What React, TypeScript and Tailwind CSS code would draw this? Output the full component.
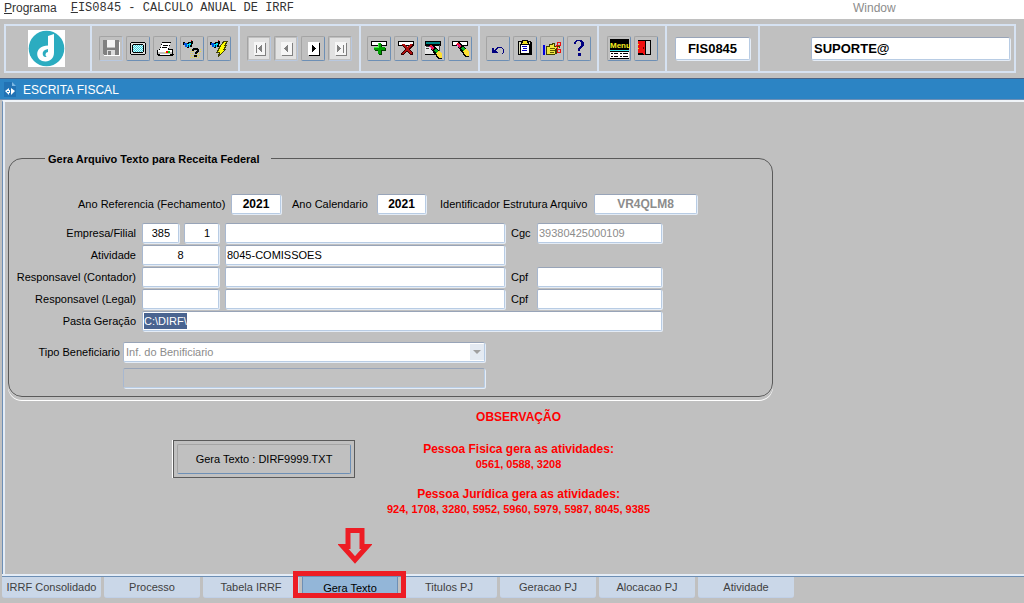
import React from 'react';

type IconProps = { children: React.ReactNode };

function Icon({ children }: IconProps) {
  return (
    <svg viewBox="0 0 24 25" width="24" height="25" shapeRendering="crispEdges" aria-hidden="true" className="block">
      {children}
    </svg>
  );
}

const SaveIcon = () => (
  <Icon>
    <path fill="#fff" d="M5 20h16V6h-1v13H5z" />
    <path fill="#808080" d="M4 4h4v8h8V4h4v15H5v-1H4z" />
    <path fill="#f4f4f4" d="M8 4h8v7H8z" />
    <path fill="#dcdcdc" d="M8 14h8v5H8z" />
    <path fill="#808080" d="M9 15h3v4H9z" />
  </Icon>
);

const ScreenIcon = () => (
  <Icon>
    <path fill="#000" d="M5 6h14v1h1v11h-1v1H5v-1H4V7h1z" />
    <path fill="#e0e0e0" d="M5 7h14v11H5z" />
    <path fill="#000" d="M7 8h10v1h1v7h-1v1H7v-1H6V9h1z" />
    <path fill="#d8ffff" d="M7 9h10v7H7z" />
    <path stroke="#40c8d8" strokeDasharray="1 1" d="M7 9.500h10M8 10.500h9M7 11.500h10M8 12.500h9M7 13.500h10M8 14.500h9M7 15.500h10" />
  </Icon>
);

const PrinterIcon = () => (
  <Icon>
    <path fill="#000" d="M9 6h9v1h-1v3h-1v3h3l1 1v4h1v1h-1v1H5v-1H4v-5h2l2-4z" />
    <path fill="#fff" d="M9 7h8l-2 7H7z" />
    <path fill="#000" d="M10 9h5v1h-5zM9 11h5v1H9z" />
    <path fill="#fff" d="M5 14h14v2H5z" />
    <path fill="#c0c0c0" d="M5 16h14v2H5z" />
    <path fill="#f00" d="M13 15h2v2h-2z" />
    <path fill="#0c0" d="M15 15h2v2h-2z" />
    <path fill="#ff0" d="M12 16h1v1h-1z" />
    <path fill="#fff" d="M7 18h10v1H7z" />
  </Icon>
);

const Torch = () => (
  <>
    <path fill="#000" d="M3 6h2v1h3V6h3V5h2v3h-1v3H9v1H7v-1H5V9H3z" />
    <path fill="#0050e0" d="M4 7h3v4H5V9H4z" />
    <path fill="#00e0f0" d="M7 8h2V7h2v2h-1v2H7z" />
    <path fill="#000080" d="M8 9h1v2H8z" />
    <path fill="#e01010" d="M11 4h1v1h-1z" />
  </>
);

const QueryHelpIcon = () => (
  <Icon>
    <path stroke="#e8d840" strokeDasharray="1 1" d="M10 13.500h3M18 13.500h3M11 15.500h4M18 15.500h3M10 17.500h4M17 17.500h4M11 19.500h3M17 19.500h3M10 21.500h10" />
    <Torch />
    <path fill="#000" d="M13 12h5v1h1v3h-1v1h-1v1h-2v-2h1v-1h1v-1h-3v1h-2v-2h1zM14 19h3v2h-3z" />
  </Icon>
);

const QueryRunIcon = () => (
  <Icon>
    <Torch />
    <path fill="#ffff00" stroke="#404000" strokeWidth="1" d="M17 5h4l-3 4h2l-3 4h2l-8 8 2-5h-3l3-4h-1z" />
  </Icon>
);

function NavIcon({ active, d }: { active?: boolean; d: string }) {
  return (
    <Icon>
      {!active && <path fill="#e2e2e2" d="M2 2h20v21H2z" />}
      <path fill={active ? '#000' : '#808080'} d="M8 7h11v13H8z" />
      <path fill={active ? '#fff' : '#f6f6f6'} d="M7 6h11v13H7z" />
      <path fill={active ? '#000' : '#808080'} d={d} />
    </Icon>
  );
}

const NEXT_D = 'M11 9h1v1h1v1h1v1h1v1h-1v1h-1v1h-1v1h-1z';
const PREV_D = 'M14 9h-1v1h-1v1h-1v1h-1v1h1v1h1v1h1v1h1z';
const LAST_D = 'M9 9h1v1h1v1h1v1h1v1h-1v1h-1v1h-1v1H9zM15 9h1v8h-1z';
const FIRST_D = 'M15 9h-1v1h-1v1h-1v1h-1v1h1v1h1v1h1v1h1zM9 9h1v8H9z';

const RecordBar = () => (
  <>
    <path fill="#000" d="M4 5h16v5H4z" />
    <path fill="#fff" d="M5 6h14v3H5z" />
  </>
);

const InsertIcon = () => (
  <Icon>
    <RecordBar />
    <path fill="#004000" d="M11 8h4v4h4v3h-4v4h-3v-4H8v-3h3z" />
    <path fill="#00a000" d="M11 7h3v4h4v3h-4v4h-3v-4H7v-3h4z" />
    <path fill="#40f040" d="M11 7h1v5H7v-1h4z" />
  </Icon>
);

const RemoveIcon = () => (
  <Icon>
    <RecordBar />
    <path fill="#300" d="M8 8h3l2 3 3-3h3v2l-3 3 3 4v2h-3l-3-4-3 4H7v-2l4-4-3-3z" />
    <path fill="#b01010" d="M8 8h2l3 3 3-3h2v1l-4 4 4 4v1h-2l-3-4-3 4H8v-1l4-4-4-4z" />
  </Icon>
);

const Crayon = () => (
  <>
    <path fill="#000" d="M8 8l3-2 10 10v5h-4z" />
    <path fill="#ffe030" d="M15 15l3-2 3 3v4h-3z" />
    <path fill="#00b020" d="M13 12l2-1 2 2-2 2z" />
    <path fill="#e8107c" d="M8 8l3-1 2 3-2 2z" />
    <path fill="#f02020" d="M9 7h2v2H9zM11 10h2v1h-2z" />
    <path fill="#ff60ff" d="M9 9h1v1H9z" />
  </>
);

const ClearFormIcon = () => (
  <Icon>
    <path fill="#000" d="M4 5h16v5H4zM4 10h14v9H4z" />
    <path fill="#008080" d="M5 6h14v2H5z" />
    <path fill="#e8e8e8" d="M4 10h15v8H4z" />
    <path fill="#404040" d="M5 12h3v1H5zM5 10h4v1H5zM18 9h1v6h-1z" />
    <g transform="translate(0 2)">
      <Crayon />
    </g>
  </Icon>
);

const ClearRecordIcon = () => (
  <Icon>
    <RecordBar />
    <Crayon />
  </Icon>
);

const UndoIcon = () => (
  <Icon>
    <path fill="#000080" d="M6 12h2v2h1v-1h1v-1h1v-1h5v1h1v1h1v4h-1v1h-1v-1h1v-4h-1v-1h-4v1h-1v1h-1v1h1v1h1v1H6z" />
  </Icon>
);

const ClipboardIcon = () => (
  <Icon>
    <path fill="#000" d="M5 5h13v1h1v13H5z" />
    <path fill="#d8d8b8" d="M6 6h11v12H6z" />
    <path fill="#000" d="M7 8h10v10H7z" />
    <path fill="#fff" d="M8 8h8v9H8z" />
    <path fill="#000" d="M9 4h6v2h1v3H8V6h1z" />
    <path fill="#f0e020" d="M10 5h4v2h1v1H9V7h1z" />
    <path fill="#0000c0" d="M9 10h5v1H9zM10 12h4v1h-4zM9 14h5v1H9z" />
  </Icon>
);

const KeysIcon = () => (
  <Icon>
    <path fill="#0000e0" d="M3 9h2v10H3z" />
    <path fill="#404000" d="M6 10h3V8h3V7h3v3h5v2h-3v6h-2v1H6z" />
    <path fill="#f0e840" d="M7 11h3V9h3V8h1v3h5v1h-3v1h-1v5H7z" />
    <path stroke="#605800" d="M10 12.500h5M10 14.500h5M10 16.500h4" />
    <path fill="none" stroke="#e81010" d="M17.500 6.500h3v3h-3zM17.500 13.500h3v3h-3zM16 9l2 4" />
  </Icon>
);

const HelpIcon = () => (
  <Icon>
    <path fill="#000080" d="M9 4h6v1h1v1h1v4h-1v1h-1v1h-1v1h-1v2h-2v-3h1v-1h1v-1h1V6h-1V5h-3v1H9v2H7V6h1V5h1zM11 17h3v3h-3z" />
  </Icon>
);

const ExitIcon = () => (
  <Icon>
    <path fill="#000" d="M4 4h13v15H4z" />
    <path fill="#d0d0d0" d="M12 5h4v13h-4z" />
    <path fill="#f01010" d="M4 5h7v14l-3-2H4z" />
    <path fill="#ffe000" d="M4 8h1v1H4zM4 12h1v1H4z" />
    <path fill="#600" d="M9 11h1v2H9z" />
  </Icon>
);

function MenuIcon() {
  return (
    <Icon>
      <path fill="#000" d="M3 3h19v20H3z" />
      <text x="3" y="12" fill="#f8f020" fontFamily="'Liberation Sans', Arial, sans-serif" fontSize="8" fontWeight="700">
        Menu
      </text>
      <path fill="#40e8f0" d="M3 14h19v1H3z" />
      <path fill="#fff" d="M3 16h19v6H3z" />
      <path fill="#000" d="M4 17h2v1H4zM7 17h4v1H7zM13 17h2v1h-2zM16 17h5v1h-5zM4 20h2v1H4zM7 20h4v1H7zM13 20h2v1h-2zM16 20h5v1h-5z" />
    </Icon>
  );
}

type Tool = { name: string; icon: React.ReactNode; disabled?: boolean };

const toolGroups: { width: string; tools: Tool[] }[] = [
  {
    width: 'w-[148px]',
    tools: [
      { name: 'Salvar', icon: <SaveIcon />, disabled: true },
      { name: 'Tela', icon: <ScreenIcon /> },
      { name: 'Imprimir', icon: <PrinterIcon /> },
      { name: 'Entrar consulta', icon: <QueryHelpIcon /> },
      { name: 'Executar consulta', icon: <QueryRunIcon /> },
    ],
  },
  {
    width: 'w-[121px]',
    tools: [
      { name: 'Primeiro', icon: <NavIcon d={FIRST_D} />, disabled: true },
      { name: 'Anterior', icon: <NavIcon d={PREV_D} />, disabled: true },
      { name: 'Proximo', icon: <NavIcon active d={NEXT_D} /> },
      { name: 'Ultimo', icon: <NavIcon d={LAST_D} />, disabled: true },
    ],
  },
  {
    width: 'w-[119px]',
    tools: [
      { name: 'Inserir', icon: <InsertIcon /> },
      { name: 'Remover', icon: <RemoveIcon /> },
      { name: 'Limpar tela', icon: <ClearFormIcon /> },
      { name: 'Limpar registro', icon: <ClearRecordIcon /> },
    ],
  },
  {
    width: 'w-[119px]',
    tools: [
      { name: 'Desfazer', icon: <UndoIcon /> },
      { name: 'Lista', icon: <ClipboardIcon /> },
      { name: 'Teclas', icon: <KeysIcon /> },
      { name: 'Ajuda', icon: <HelpIcon /> },
    ],
  },
  {
    width: 'w-[68px]',
    tools: [
      { name: 'Menu', icon: <MenuIcon /> },
      { name: 'Sair', icon: <ExitIcon /> },
    ],
  },
];

function ToolButton({ name, icon, disabled }: Tool) {
  const edge = disabled ? 'border-r-[#b8c8e0] border-b-[#b8c8e0]' : 'border-r-[#6d8fb5] border-b-[#6d8fb5]';
  return (
    <button
      type="button"
      aria-label={name}
      disabled={disabled}
      className={`flex h-[25px] w-6 items-center justify-center overflow-hidden rounded-[2px] border border-t-[#a4a4a4] border-l-[#a4a4a4] ${edge}`}
    >
      <span className="shrink-0">{icon}</span>
    </button>
  );
}

const fieldEdge =
  'min-w-0 rounded-[2px] border border-t-[#98a4b8] border-l-[#a8b8d0] border-r-[#b8cce4] border-b-[#b8cce4] shadow-[1px_1px_0_#e4ecf6] outline-none';

type FieldProps = React.InputHTMLAttributes<HTMLInputElement>;

function Field({ className = '', ...rest }: FieldProps) {
  return <input type="text" {...rest} className={`${fieldEdge} bg-white ${className}`} />;
}

function Logo() {
  return (
    <svg viewBox="0 0 37 37" width="37" height="37" role="img" aria-label="Logo" className="block bg-white">
      <circle cx="18.500" cy="18.500" r="17.800" fill="#2bacc0" />
      <path
        fill="#fff"
        d="M20 6l6-2v18.500c0 5.500-3.500 9-8.500 9-4.800 0-8.300-3-8.300-7.500 0-5 4-8 10.800-8.500zM20 19c-3.800.6-5.500 2.500-5.300 5 .2 2.300 2 3.500 4 2.800-1.200-.8-1.500-2.200-.9-3.400.5-.9 1.300-1.300 2.200-1.400z"
      />
    </svg>
  );
}

const tabs = ['IRRF Consolidado', 'Processo', 'Tabela IRRF', 'Gera Texto', 'Titulos PJ', 'Geracao PJ', 'Alocacao PJ', 'Atividade'];

function HighlightArrow() {
  return (
    <svg viewBox="0 0 34 38" width="34" height="38" aria-hidden="true">
      <path fill="none" stroke="#ed1c24" strokeWidth="5" d="M10 2.500h14v16h5L17 32 5 18.500h5z" />
    </svg>
  );
}

export default function App() {
  return (
    <div className="flex min-h-screen flex-col bg-[#c0c0c0] font-['Liberation_Sans',Arial,sans-serif] text-[11px] leading-4 text-black">
      <nav className="flex h-[19px] items-start bg-white text-xs leading-4 text-[#333]">
        <div className="flex w-[853px] shrink-0 gap-[14px] pl-1">
          <a href="#programa">
            <span className="underline">P</span>rograma
          </a>
          <a href="#fis0845" className="font-['Liberation_Mono','Courier_New',monospace]">
            <span className="underline">F</span>IS0845 - CALCULO ANUAL DE IRRF
          </a>
        </div>
        <a href="#window" className="text-[#8c8c8c]">
          Window
        </a>
      </nav>

      <header className="px-1 pt-[5px] pb-[5px]">
        <div className="mr-1 flex h-[49px] divide-x-2 divide-[#d6e2f2] border-2 border-[#d6e2f2]">
          <div className="flex w-[86px] shrink-0 items-center justify-center pr-1">
            <Logo />
          </div>
          {toolGroups.map((group) => (
            <div key={group.tools[0].name} className={`flex shrink-0 items-center justify-center gap-[3px] ${group.width}`}>
              {group.tools.map((tool) => (
                <ToolButton key={tool.name} {...tool} />
              ))}
            </div>
          ))}
          <div className="flex w-[93px] shrink-0 items-center justify-center">
            <Field aria-label="Programa atual" defaultValue="FIS0845" className="h-[23px] w-[75px] text-center text-[13px] font-bold" />
          </div>
          <div className="flex min-w-0 flex-1 items-center justify-end pr-1 pl-[51px]">
            <Field aria-label="Usuario" defaultValue="SUPORTE@" className="h-[23px] w-full pl-[2px] text-[13px] font-bold" />
          </div>
        </div>
      </header>

      <div className="flex h-[22px] items-center gap-[7px] border-t border-b border-t-[#4a6488] border-b-[#6d8fb5] bg-[#2c84c4] pt-px pl-1 text-xs text-white">
        <svg viewBox="0 0 12 15" width="12" height="15" aria-hidden="true">
          <path fill="#2272b4" d="M0 0h8l4 4v11H0z" />
          <path fill="#7cb8e4" d="M8 0l4 4H8z" />
          <path fill="#fff" d="M1 9l4-3v2h1v3H5v2zM7 6l4 3-4 4z" />
          <path fill="#2c84c4" d="M3 9h2v1H3z" />
        </svg>
        <h1>ESCRITA FISCAL</h1>
      </div>

      <main className="ml-[2px] flex flex-1 flex-col border-t-2 border-l border-t-[#f0f4f8] border-l-[#6d8fb5]">
        <div className="flex flex-1 flex-col border-l-2 border-[#e4ecf6] pt-[47px] pl-[3px]">
          <fieldset className="w-[765px] rounded-[14px] border border-[#5a5a5a] pb-2 shadow-[0_3px_0_#c0c0c0,0_4px_0_#fff]">
            <legend className="ml-9 pt-[2px] pr-[11px] pl-[3px] font-bold">Gera Arquivo Texto para Receita Federal</legend>

            <div className="flex items-center pt-[27px] pl-[69px]">
              <label htmlFor="anoref" className="w-[153px]">
                Ano Referencia (Fechamento)
              </label>
              <Field id="anoref" defaultValue="2021" className="h-5 w-[50px] text-center text-xs font-bold" />
              <label htmlFor="anocal" className="ml-[11px] w-[85px]">
                Ano Calendario
              </label>
              <Field id="anocal" defaultValue="2021" className="h-5 w-[49px] text-center text-xs font-bold" />
              <label htmlFor="ident" className="ml-[14px] w-[154px]">
                Identificador Estrutura Arquivo
              </label>
              <Field id="ident" defaultValue="VR4QLM8" disabled className="h-5 w-[103px] text-center text-xs font-bold text-[#8c8c8c]" />
            </div>

            <div className="mt-2 grid auto-rows-[21px] grid-cols-[127px_77px_280px_20px_125px] items-center gap-x-[6px] gap-y-px">
              <label htmlFor="empresa" className="text-right">
                Empresa/Filial
              </label>
              <div className="flex gap-[5px]">
                <Field id="empresa" defaultValue="385" className="h-5 w-[37px] pr-2 text-right" />
                <Field aria-label="Filial" defaultValue="1" className="h-5 w-[35px] pr-2 text-right" />
              </div>
              <Field aria-label="Nome da empresa" className="h-5 px-px" />
              <label htmlFor="cgc">Cgc</label>
              <Field id="cgc" defaultValue="39380425000109" disabled className="h-5 px-px text-[#8c8c8c]" />

              <label htmlFor="atividade" className="text-right">
                Atividade
              </label>
              <Field id="atividade" defaultValue="8" className="h-5 text-center" />
              <Field aria-label="Descricao da atividade" defaultValue="8045-COMISSOES" className="h-5 px-px" />
              <span />
              <span />

              <label htmlFor="contador" className="text-right">
                Responsavel (Contador)
              </label>
              <Field id="contador" className="h-5 px-px" />
              <Field aria-label="Nome do contador" className="h-5 px-px" />
              <label htmlFor="cpf1">Cpf</label>
              <Field id="cpf1" className="h-5 px-px" />

              <label htmlFor="legal" className="text-right">
                Responsavel (Legal)
              </label>
              <Field id="legal" className="h-5 px-px" />
              <Field aria-label="Nome do responsavel legal" className="h-5 px-px" />
              <label htmlFor="cpf2">Cpf</label>
              <Field id="cpf2" className="h-5 px-px" />

              <label htmlFor="pasta" className="text-right">
                Pasta Geração
              </label>
              <div className={`${fieldEdge} col-span-4 flex h-5 items-center bg-white px-px`}>
                <input
                  id="pasta"
                  type="text"
                  defaultValue={'C:\\DIRF\\'}
                  className="h-4 w-[43px] bg-[#4a6490] text-white outline-none"
                />
              </div>
            </div>

            <div className="mt-[11px] flex items-center gap-[3px]">
              <label htmlFor="tipo" className="w-[111px] text-right">
                Tipo Beneficiario
              </label>
              <div className={`${fieldEdge} grid h-5 w-[362px] items-center bg-white`}>
                <select
                  id="tipo"
                  disabled
                  className="col-start-1 row-start-1 h-[18px] appearance-none pl-[2px] text-[#8c8c8c] opacity-100"
                >
                  <option>Inf. do Benificiario</option>
                </select>
                <span className="pointer-events-none col-start-1 row-start-1 flex h-4 w-[14px] items-center justify-center justify-self-end bg-[#e4eaf2]">
                  <svg viewBox="0 0 8 4" width="8" height="4" aria-hidden="true">
                    <path fill="#a0a0a0" d="M0 0h8L4 4z" />
                  </svg>
                </span>
              </div>
            </div>
            <div className="mt-[6px] ml-[114px] flex">
              <input type="text" aria-label="Beneficiario" disabled className={`${fieldEdge} h-5 w-[362px] bg-[#c2c2c2]`} />
            </div>
          </fieldset>

          <section className="mt-[13px] flex items-start pl-[165px]">
            <button type="button" className="mt-[30px] h-[38px] w-[182px] border border-[#5a5a5a] p-[3px] shadow-[-1px_0_0_#fff]">
              <span className="flex h-full items-center justify-center rounded-[2px] border border-t-[#a4a4a4] border-l-[#a4a4a4] border-r-[#6d8fb5] border-b-[#6d8fb5]">
                Gera Texto : DIRF9999.TXT
              </span>
            </button>
            <div className="ml-8 text-center leading-[15px] font-bold text-[#f00]">
              <h2 className="text-xs leading-[15px]">OBSERVAÇÃO</h2>
              <p className="mt-[17px] text-xs leading-[15px]">Pessoa Fisica gera as atividades:</p>
              <p>0561, 0588, 3208</p>
              <p className="mt-[15px] text-xs leading-[15px]">Pessoa Jurídica gera as atividades:</p>
              <p>924, 1708, 3280, 5952, 5960, 5979, 5987, 8045, 9385</p>
            </div>
          </section>
        </div>
      </main>

      <footer className="ml-[2px] border-t-2 border-[#e4ecf6]">
        <div className="flex h-[27px] gap-[3px] border-t border-[#6d8fb5]" role="tablist">
          {tabs.map((tab) =>
            tab === 'Gera Texto' ? (
              <div key={tab} className="relative h-[21px] w-24">
                <button
                  type="button"
                  role="tab"
                  aria-selected="true"
                  className="block h-full w-full rounded-b-[3px] border-x border-[#6d8fb5] bg-[#93b6d8]"
                >
                  {tab}
                </button>
                <span className="pointer-events-none absolute -top-[6px] -left-[9px] h-[27px] w-[113px] border-5 border-[#ed1c24]" />
                <span className="pointer-events-none absolute -top-[49px] left-9">
                  <HighlightArrow />
                </span>
              </div>
            ) : (
              <button
                key={tab}
                type="button"
                role="tab"
                aria-selected="false"
                className="h-[21px] w-24 rounded-b-[3px] border-b border-[#c0d0e8] bg-[#cad7e8] text-[#404040] first:w-[99px]"
              >
                {tab}
              </button>
            ),
          )}
        </div>
      </footer>
    </div>
  );
}
